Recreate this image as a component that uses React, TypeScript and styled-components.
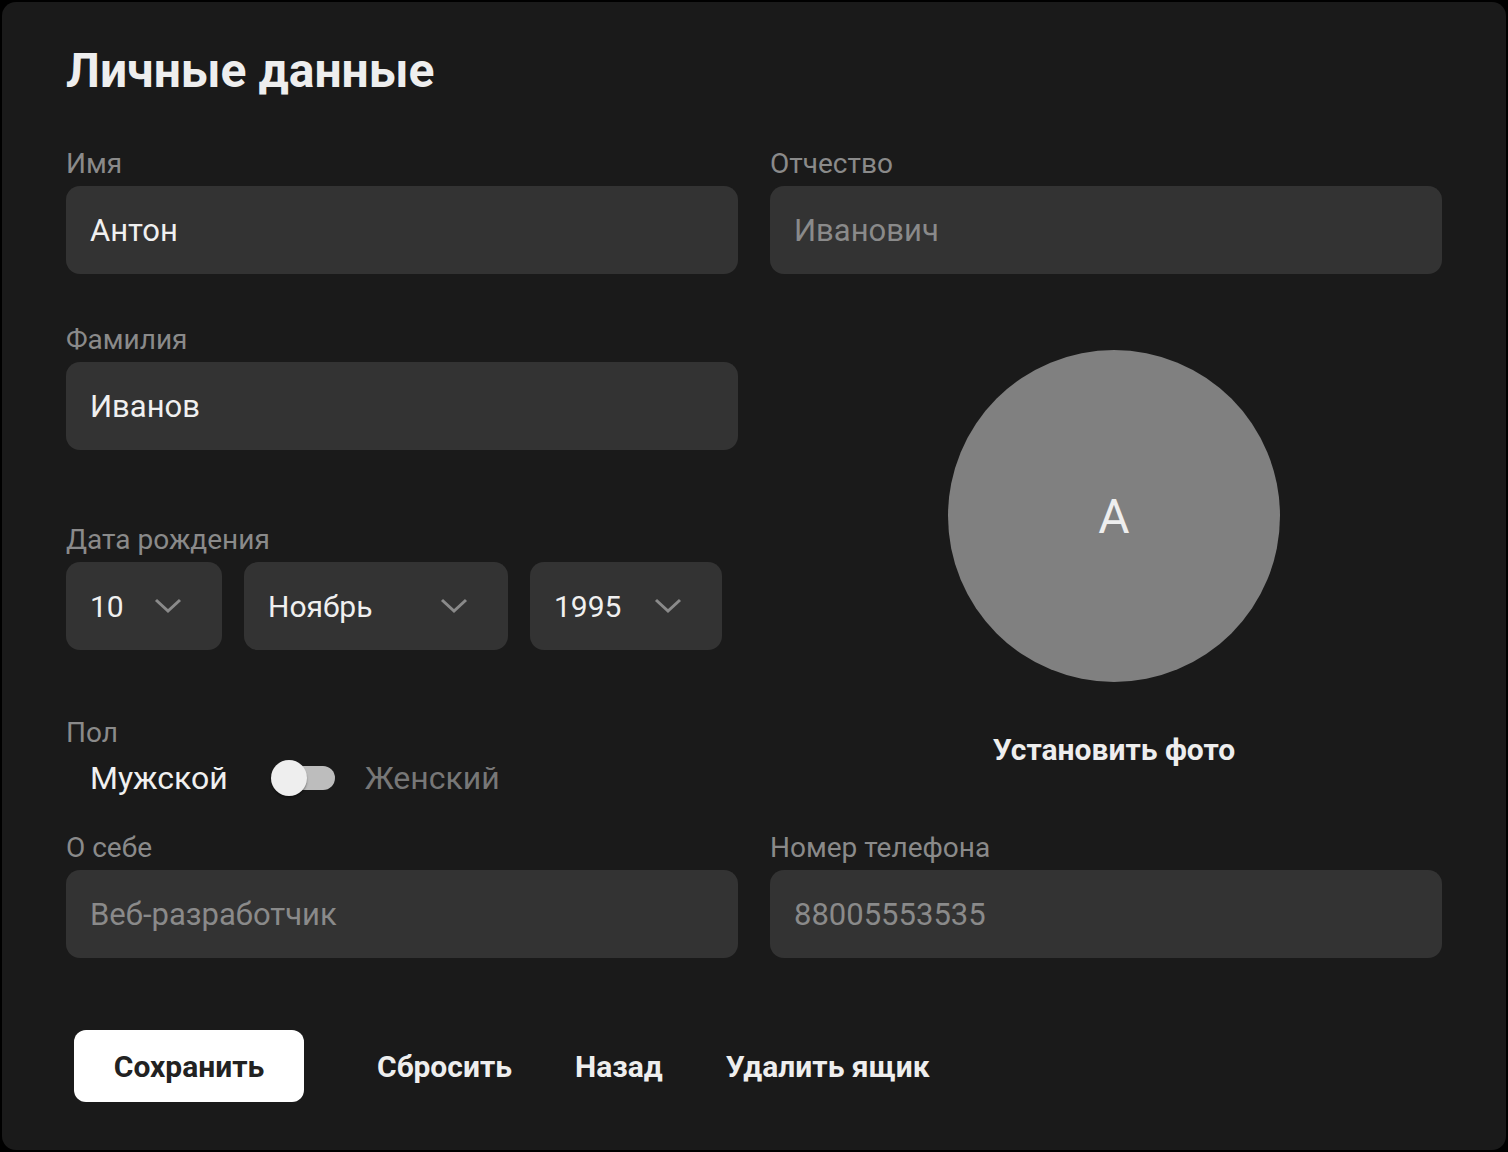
import React from "react";
import styled, { createGlobalStyle } from "styled-components";

const Global = createGlobalStyle`
  html, body { margin: 0; padding: 0; background: #000; }
  body { font-family: Roboto, "Noto Sans", "Liberation Sans", sans-serif; }
  * { box-sizing: border-box; }
`;

const Card = styled.div`
  margin: 2px;
  width: 1504px;
  height: 1148px;
  background: #1a1a1a;
  border-radius: 14px;
  padding: 41px 64px 48px;
`;

const Title = styled.h1`
  margin: 0;
  font-size: 48px;
  line-height: 56px;
  font-weight: 700;
  color: #eeeeee;
`;

const Grid = styled.div`
  display: grid;
  grid-template-columns: 672px 672px;
  column-gap: 32px;
  margin-top: 49px;
`;

const Column = styled.div`
  display: flex;
  flex-direction: column;
`;

const Field = styled.div<{ $top?: number }>`
  display: flex;
  flex-direction: column;
  gap: 6px;
  margin-top: ${(p) => p.$top ?? 0}px;
`;

const Label = styled.div`
  font-size: 28px;
  line-height: 32px;
  color: #8a8a8a;
`;

const Input = styled.div<{ $placeholder?: boolean }>`
  height: 88px;
  border-radius: 14px;
  background: #333333;
  display: flex;
  align-items: center;
  padding: 0 24px;
  font-size: 31px;
  color: ${(p) => (p.$placeholder ? "#8a8a8a" : "#f0f0f0")};
`;

const SelectRow = styled.div`
  display: flex;
  gap: 22px;
`;

const Select = styled.div<{ $w: number }>`
  width: ${(p) => p.$w}px;
  height: 88px;
  border-radius: 14px;
  background: #333333;
  display: flex;
  align-items: center;
  justify-content: space-between;
  padding: 0 40px 0 24px;
  font-size: 30px;
  color: #f0f0f0;
`;

const ToggleRow = styled.div`
  display: flex;
  align-items: center;
  height: 48px;
  margin-top: 5px;
  padding-left: 24px;
  font-size: 32px;
`;

const Option = styled.span<{ $active?: boolean }>`
  color: ${(p) => (p.$active ? "#f0f0f0" : "#777777")};
`;

const Switch = styled.div`
  position: relative;
  width: 64px;
  height: 36px;
  margin: 0 30px 0 43px;
`;

const Track = styled.div`
  position: absolute;
  left: 6px;
  top: 6px;
  width: 58px;
  height: 24px;
  border-radius: 12px;
  background: #bdbdbd;
`;

const Thumb = styled.div`
  position: absolute;
  left: 0;
  top: 0;
  width: 36px;
  height: 36px;
  border-radius: 50%;
  background: #eeeeee;
  box-shadow: 0 2px 2px rgba(0, 0, 0, 0.35);
`;

const AvatarBlock = styled.div`
  display: flex;
  flex-direction: column;
  align-items: center;
  padding-left: 16px;
  margin-top: 76px;
  gap: 52px;
`;

const Avatar = styled.div`
  width: 332px;
  height: 332px;
  border-radius: 50%;
  background: #808080;
  display: flex;
  align-items: center;
  justify-content: center;
  font-size: 48px;
  color: #eeeeee;
`;

const PhotoLink = styled.div`
  font-size: 30px;
  line-height: 32px;
  font-weight: 700;
  color: #eeeeee;
`;

const BottomRow = styled.div`
  grid-column: 1 / span 2;
  display: grid;
  grid-template-columns: 672px 672px;
  column-gap: 32px;
  margin-top: 30px;
`;

const Actions = styled.div`
  display: flex;
  align-items: center;
  margin-top: 72px;
  padding-left: 8px;
`;

const PrimaryButton = styled.button`
  width: 230px;
  height: 72px;
  border: none;
  border-radius: 12px;
  background: #ffffff;
  color: #222222;
  font-family: inherit;
  font-size: 30px;
  font-weight: 700;
  margin-right: 73px;
`;

const TextButton = styled.button`
  border: none;
  background: transparent;
  padding: 0;
  margin-right: 63px;
  color: #eeeeee;
  font-family: inherit;
  font-size: 30px;
  font-weight: 700;
`;

const Chevron = () => (
  <svg width="28" height="16" viewBox="0 0 28 16" fill="none">
    <polyline points="2,2 14,13 26,2" stroke="#8a8a8a" strokeWidth="3" />
  </svg>
);

export default function App() {
  return (
    <>
      <Global />
      <Card>
        <Title>Личные данные</Title>
        <Grid>
          <Column>
            <Field>
              <Label>Имя</Label>
              <Input>Антон</Input>
            </Field>
            <Field $top={50}>
              <Label>Фамилия</Label>
              <Input>Иванов</Input>
            </Field>
            <Field $top={74}>
              <Label>Дата рождения</Label>
              <SelectRow>
                <Select $w={156}>
                  <span>10</span>
                  <Chevron />
                </Select>
                <Select $w={264}>
                  <span>Ноябрь</span>
                  <Chevron />
                </Select>
                <Select $w={192}>
                  <span>1995</span>
                  <Chevron />
                </Select>
              </SelectRow>
            </Field>
            <Field $top={67}>
              <Label>Пол</Label>
            </Field>
            <ToggleRow>
              <Option $active>Мужской</Option>
              <Switch>
                <Track />
                <Thumb />
              </Switch>
              <Option>Женский</Option>
            </ToggleRow>
          </Column>
          <Column>
            <Field>
              <Label>Отчество</Label>
              <Input $placeholder>Иванович</Input>
            </Field>
            <AvatarBlock>
              <Avatar>A</Avatar>
              <PhotoLink>Установить фото</PhotoLink>
            </AvatarBlock>
          </Column>
          <BottomRow>
            <Field>
              <Label>О себе</Label>
              <Input $placeholder>Веб-разработчик</Input>
            </Field>
            <Field>
              <Label>Номер телефона</Label>
              <Input $placeholder>88005553535</Input>
            </Field>
          </BottomRow>
        </Grid>
        <Actions>
          <PrimaryButton>Сохранить</PrimaryButton>
          <TextButton>Сбросить</TextButton>
          <TextButton>Назад</TextButton>
          <TextButton>Удалить ящик</TextButton>
        </Actions>
      </Card>
    </>
  );
}
